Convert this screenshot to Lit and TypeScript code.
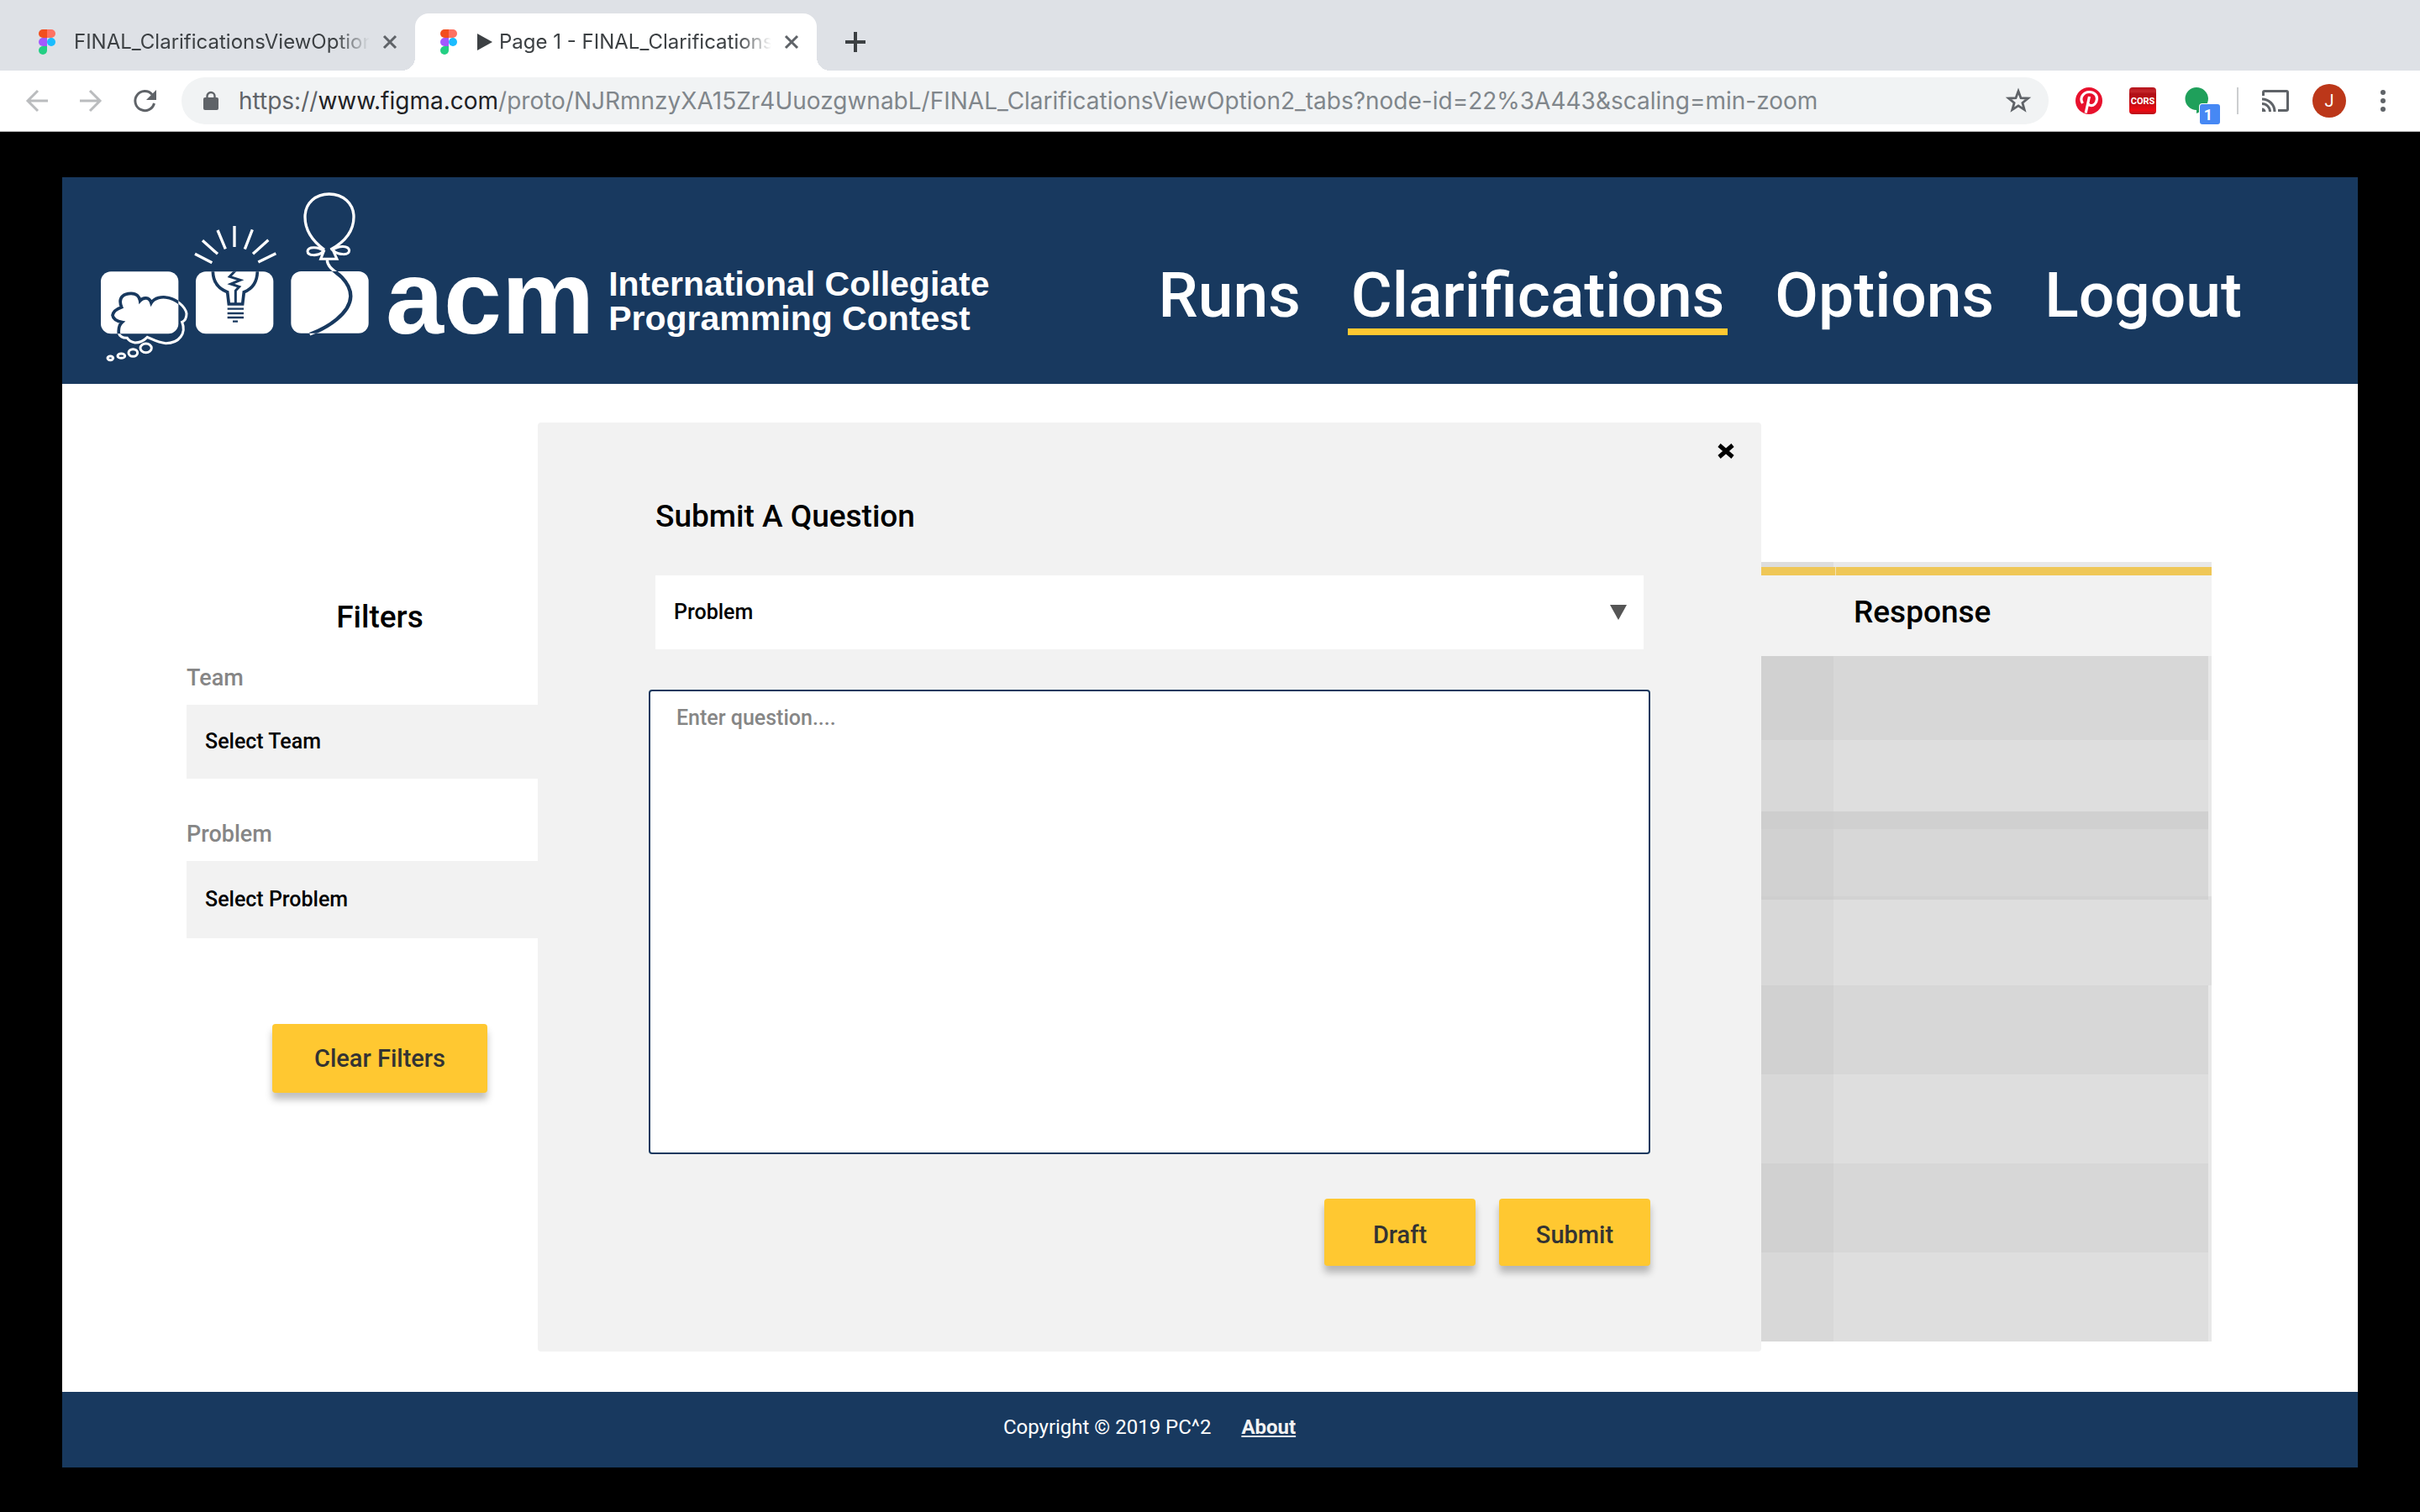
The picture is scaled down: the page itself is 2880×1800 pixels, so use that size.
import { LitElement, html, css, nothing } from "lit";
import { customElement } from "lit/decorators.js";

const figmaMark = html`
  <svg class="figma" viewBox="0 0 20 30" aria-hidden="true">
    <path fill="#f24e1e" d="M5 0h5v10H5A5 5 0 0 1 5 0z" />
    <path fill="#ff7262" d="M10 0h5a5 5 0 0 1 0 10h-5z" />
    <path fill="#a259ff" d="M5 10h5v10H5a5 5 0 0 1 0-10z" />
    <circle fill="#1abcfe" cx="15" cy="15" r="5" />
    <path fill="#23cf84" d="M5 20h5v5a5 5 0 1 1-5-5z" />
  </svg>
`;

@customElement("browser-bar")
class BrowserBar extends LitElement {
  static styles = css`
    :host {
      display: block;
      font-family: Inter, Roboto, "Liberation Sans", sans-serif;
      color: #3c4043;
    }
    button {
      display: grid;
      place-items: center;
      border: 0;
      padding: 0;
      background: none;
      color: inherit;
      font: inherit;
    }
    svg {
      display: block;
      overflow: visible;
    }
    .strip {
      display: flex;
      align-items: flex-end;
      height: 84px;
      padding-left: 16px;
      background: #dee1e6;
    }
    .tab {
      position: relative;
      display: flex;
      align-items: center;
      box-sizing: border-box;
      width: 478px;
      height: 68px;
      padding: 0 14px 0 30px;
      border-radius: 16px 16px 0 0;
    }
    .tab.active {
      background: #fff;
    }
    .tab.active::before,
    .tab.active::after {
      content: "";
      position: absolute;
      bottom: 0;
      width: 16px;
      height: 16px;
    }
    .tab.active::before {
      left: -16px;
      background: radial-gradient(circle at 0 0, transparent 16px, #fff 16px);
    }
    .tab.active::after {
      right: -16px;
      background: radial-gradient(circle at 100% 0, transparent 16px, #fff 16px);
    }
    .figma {
      flex: none;
      width: 20px;
      height: 30px;
    }
    .play {
      flex: none;
      width: 18px;
      height: 20px;
      margin: 0 8px 0 24px;
    }
    .title {
      flex: 1;
      min-width: 0;
      margin-left: 22px;
      white-space: nowrap;
      font-size: 24px;
      line-height: 32px;
      mask-image: linear-gradient(to left, transparent, #000 40px);
    }
    .play + .title {
      margin-left: 0;
    }
    .close {
      width: 32px;
      height: 32px;
      margin-left: 8px;
      color: #5f6368;
    }
    .plus {
      width: 60px;
      height: 68px;
      margin-left: 16px;
    }
    .toolbar {
      display: flex;
      align-items: center;
      height: 72px;
      padding: 0 12px;
      border-bottom: 1px solid #b6b4b6;
      background: #fff;
      color: #5f6368;
    }
    .cell {
      flex: none;
      width: 64px;
      height: 56px;
    }
    .off {
      color: #babcbe;
    }
    .omnibox {
      flex: 1;
      display: flex;
      align-items: center;
      height: 56px;
      margin: 0 16px 0 12px;
      padding: 0 12px 0 26px;
      border-radius: 28px;
      background: #f1f3f4;
    }
    .url {
      flex: 1;
      margin-left: 24px;
      white-space: nowrap;
      font-size: 28px;
      line-height: 36px;
      color: #80868b;
    }
    .scheme {
      color: #5f6368;
    }
    .host {
      color: #202124;
    }
    .star {
      width: 48px;
      height: 48px;
    }
    .rule {
      width: 2px;
      height: 32px;
      margin: 0 12px 0 16px;
      background: #ccced0;
    }
    .cors {
      font: 700 11px Roboto, sans-serif;
    }
    .count {
      font: 700 18px Roboto, sans-serif;
    }
    .avatar {
      font: 400 20px Roboto, sans-serif;
    }
  `;

  private renderTab(title: string, active: boolean) {
    return html`
      <div class="tab ${active ? "active" : ""}">
        ${figmaMark}
        ${active
          ? html`<svg class="play" viewBox="0 0 18 20" aria-hidden="true"><path d="M0 0 18 10 0 20z" fill="#3c4043" /></svg>`
          : nothing}
        <span class="title">${title}</span>
        <button class="close" aria-label="Close tab">
          <svg width="16" height="16" viewBox="0 0 16 16"><path d="M1 1 15 15M15 1 1 15" stroke="currentColor" stroke-width="3" /></svg>
        </button>
      </div>
    `;
  }

  render() {
    return html`
      <div class="strip">
        ${this.renderTab("FINAL_ClarificationsViewOption", false)}
        ${this.renderTab("Page 1 - FINAL_Clarifications", true)}
        <button class="plus" aria-label="New tab">
          <svg width="24" height="24" viewBox="0 0 24 24"><path d="M12 0V24M0 12H24" stroke="currentColor" stroke-width="4" /></svg>
        </button>
      </div>
      <div class="toolbar">
        <button class="cell off" aria-label="Back">
          <svg width="26" height="26" viewBox="0 0 26 26"><path d="M26 13H3M14 1 2 13 14 25" fill="none" stroke="currentColor" stroke-width="3" /></svg>
        </button>
        <button class="cell off" aria-label="Forward">
          <svg width="26" height="26" viewBox="0 0 26 26"><path d="M0 13H23M12 1 24 13 12 25" fill="none" stroke="currentColor" stroke-width="3" /></svg>
        </button>
        <button class="cell" aria-label="Reload">
          <svg width="26" height="26" viewBox="0 0 26 26">
            <path d="M22 5.500A11.500 11.500 0 1 0 24.500 16" fill="none" stroke="currentColor" stroke-width="3" />
            <path d="M27 0V12H15z" fill="currentColor" />
          </svg>
        </button>
        <div class="omnibox">
          <svg width="18" height="22" viewBox="0 0 18 22" aria-hidden="true">
            <rect x="0" y="7" width="18" height="15" rx="2" fill="currentColor" />
            <path d="M4.500 8V5.500a4.500 4.500 0 0 1 9 0V8" fill="none" stroke="currentColor" stroke-width="2.400" />
          </svg>
          <span class="url"><span class="scheme">https://</span><span class="host">www.figma.com</span>/proto/NJRmnzyXA15Zr4UuozgwnabL/FINAL_ClarificationsViewOption2_tabs?node-id=22%3A443&amp;scaling=min-zoom</span>
          <button class="star" aria-label="Bookmark this page">
            <svg width="30" height="30" viewBox="0 0 30 30">
              <path d="M15 3.500 18 11.700 26.500 12 19.900 17.400 22.200 25.600 15 20.900 7.800 25.600 10.100 17.400 3.500 12 12 11.700z" fill="none" stroke="currentColor" stroke-width="2.800" />
            </svg>
          </button>
        </div>
        <button class="cell" aria-label="Pinterest">
          <svg width="32" height="32" viewBox="0 0 32 32">
            <circle cx="16" cy="16" r="16" fill="#e8112d" />
            <path d="M8.500 19C4 12 10 5.500 16.500 5.500c6 0 9.500 4 9 8.500-.5 5-4 8-7.500 7.500-2-.3-2.800-1.500-2.800-2.500M16.500 11 12.200 30.500" fill="none" stroke="#fff" stroke-width="3.200" />
          </svg>
        </button>
        <button class="cell" aria-label="CORS">
          <svg width="32" height="32" viewBox="0 0 32 32">
            <defs>
              <linearGradient id="red" x1="0" y1="0" x2="0" y2="1">
                <stop offset="0" stop-color="#b5121b" />
                <stop offset="0.150" stop-color="#c4262b" />
                <stop offset="0.250" stop-color="#b00f16" />
                <stop offset="0.600" stop-color="#c60d14" />
                <stop offset="0.850" stop-color="#ee0a12" />
                <stop offset="1" stop-color="#b5121b" />
              </linearGradient>
            </defs>
            <rect width="32" height="32" rx="4" fill="url(#red)" />
            <text class="cors" x="16" y="20" text-anchor="middle" fill="#fff">CORS</text>
          </svg>
        </button>
        <button class="cell" aria-label="Hangouts, 1 notification">
          <svg width="32" height="32" viewBox="0 0 32 32">
            <path d="M16 0a14 14 0 0 1 14 13C30 21 24 28 16 31V27A13.500 13.500 0 0 1 16 0z" fill="#1fa05b" />
            <rect x="19" y="19" width="26" height="26" rx="4" fill="#fff" />
            <rect x="20" y="20" width="24" height="24" rx="3" fill="#4688f4" />
            <text class="count" x="30" y="39" text-anchor="middle" fill="#fff">1</text>
          </svg>
        </button>
        <span class="rule"></span>
        <button class="cell" aria-label="Cast">
          <svg width="32" height="26" viewBox="0 0 32 26">
            <g fill="none" stroke="currentColor" stroke-width="3">
              <path d="M1.500 7V3Q1.500 1.500 3 1.500H29Q30.500 1.500 30.500 3V23Q30.500 24.500 29 24.500H19" />
              <path d="M0 16.500A9.500 9.500 0 0 1 9.500 26M0 11A15 15 0 0 1 15 26" />
            </g>
            <path d="M0 21.500A4.500 4.500 0 0 1 4.500 26H0z" fill="currentColor" />
          </svg>
        </button>
        <button class="cell" aria-label="Profile">
          <svg width="40" height="40" viewBox="0 0 40 40">
            <circle cx="20" cy="20" r="20" fill="#bc3719" />
            <text class="avatar" x="20" y="27" text-anchor="middle" fill="#fff">J</text>
          </svg>
        </button>
        <button class="cell" aria-label="Menu">
          <svg width="6" height="26" viewBox="0 0 6 26" fill="currentColor">
            <circle cx="3" cy="3" r="3" /><circle cx="3" cy="13" r="3" /><circle cx="3" cy="23" r="3" />
          </svg>
        </button>
      </div>
    `;
  }
}

const cloud =
  "M104 437C88 398 118 388 138 388 158 388 168 400 170 414 180 402 203 398 210 422 222 402 250 400 262 402 300 406 332 436 336 460 336 476 330 486 320 490 336 530 310 566 262 566 235 564 215 552 196 544 182 558 168 564 152 564 138 562 128 554 124 547 108 548 96 540 94 530 92 510 98 498 106 491 90 488 74 480 72 466 74 452 90 442 104 437Z";
const balloonString = "M838 268C838 296 870 310 890 330 915 356 922 376 922 398 920 460 840 510 776 534";

@customElement("contest-header")
class ContestHeader extends LitElement {
  static styles = css`
    :host {
      display: flex;
      align-items: flex-start;
      justify-content: space-between;
      box-sizing: border-box;
      height: 246px;
      padding: 9px 134px 0 36px;
      background: #18395f;
      color: #fff;
    }
    .brand {
      display: flex;
    }
    .art {
      display: block;
      width: 340px;
      height: 220px;
    }
    .acm {
      margin-left: 9px;
      padding-top: 84px;
      font: 700 124px/100px "Liberation Sans", Arial, sans-serif;
    }
    .name {
      margin-left: 17px;
      padding-top: 98px;
      font: 700 41px/41px "Liberation Sans", Arial, sans-serif;
      white-space: nowrap;
    }
    .nav {
      display: flex;
      gap: 52px;
      padding-top: 93px;
    }
    .link {
      padding: 0 4px 2px;
      border-bottom: 8px solid transparent;
      color: #fff;
      font: 500 75px/76px Roboto, sans-serif;
      text-decoration: none;
    }
    .link.current {
      border-color: #ffc831;
    }
  `;

  render() {
    const line = "#18395f";
    return html`
      <div class="brand">
        <svg class="art" viewBox="0 0 1020 660" fill="none" aria-hidden="true">
          <defs>
            <clipPath id="c1"><rect x="30" y="310" width="277" height="222" rx="36" /></clipPath>
            <clipPath id="c2"><rect x="369" y="310" width="277" height="222" rx="36" /></clipPath>
            <clipPath id="c3"><rect x="709" y="309" width="277" height="221" rx="36" /></clipPath>
          </defs>
          <g fill="#fff">
            <rect x="30" y="310" width="277" height="222" rx="36" />
            <rect x="369" y="310" width="277" height="222" rx="36" />
            <rect x="709" y="309" width="277" height="221" rx="36" />
          </g>
          <path d=${cloud} stroke="#fff" stroke-width="9" />
          <path d=${cloud} stroke=${line} stroke-width="11" clip-path="url(#c1)" />
          <g stroke="#fff" stroke-width="9">
            <ellipse cx="191" cy="583" rx="20" ry="16" />
            <ellipse cx="145" cy="600" rx="16" ry="13" />
            <ellipse cx="103" cy="611" rx="13" ry="8" />
            <ellipse cx="64" cy="619" rx="10" ry="7" />
          </g>
          <path d="M507 147V222M447 162 475 229M571 160 544 230M393 199 447 247M628 197 573 247M366 247 427 278M655 245 592 276" stroke="#fff" stroke-width="10" />
          <g stroke=${line} clip-path="url(#c2)">
            <path d="M430 306C430 350 452 372 482 383L487 426H536L541 383C570 372 589 350 589 306" stroke-width="11" />
            <path d="M511 306 490 328 528 340 494 354 524 364 511 378V426" stroke-width="9" />
            <path d="M482 443H540M482 459H540M482 474H540M501 488H519" stroke-width="7" />
          </g>
          <g stroke="#fff" stroke-width="10">
            <path d="M828 232C784 200 759 160 759 115 759 64 798 33 845 33 894 33 933 66 933 115 933 160 905 202 850 232" />
            <path d="M824 235C810 222 770 218 768 237 768 256 806 254 822 240M858 232C880 216 914 216 917 234 916 254 880 250 862 237M828 232 815 265H873L858 232" stroke-width="9" />
            <path d=${balloonString} />
          </g>
          <path d=${balloonString} stroke=${line} stroke-width="13" clip-path="url(#c3)" />
        </svg>
        <span class="acm">acm</span>
        <span class="name">International Collegiate<br />Programming Contest</span>
      </div>
      <nav class="nav">
        <a class="link" href="#runs">Runs</a>
        <a class="link current" href="#clarifications" aria-current="page">Clarifications</a>
        <a class="link" href="#options">Options</a>
        <a class="link" href="#logout">Logout</a>
      </nav>
    `;
  }
}

const buttonStyles = css`
  .action {
    width: 180px;
    height: 80px;
    padding: 0;
    border: 0;
    border-radius: 4px;
    background: #ffc831;
    box-shadow: 0 8px 8px rgba(0, 0, 0, 0.25);
    color: #333;
    font: 500 29px/32px Roboto, sans-serif;
  }
  select {
    appearance: none;
    box-sizing: border-box;
    width: 100%;
    height: 88px;
    padding: 0 22px;
    border: 0;
    border-radius: 0;
    background: #f2f2f2;
    color: #000;
    font: 500 25px/28px Roboto, sans-serif;
  }
  h2 {
    margin: 0;
    font: 500 37px/44px Roboto, sans-serif;
  }
`;

@customElement("filter-panel")
class FilterPanel extends LitElement {
  static styles = [
    buttonStyles,
    css`
      :host {
        display: flex;
        flex-direction: column;
        padding-top: 44px;
      }
      h2 {
        margin-bottom: 34px;
        text-align: center;
      }
      .label {
        margin-bottom: 16px;
        color: #868686;
        font: 500 27px/32px Roboto, sans-serif;
      }
      .field {
        margin-bottom: 50px;
      }
      .tall {
        height: 92px;
      }
      .clear {
        align-self: center;
        width: 256px;
        height: 82px;
        margin-top: 52px;
      }
    `,
  ];

  render() {
    return html`
      <h2>Filters</h2>
      <label class="label" for="team">Team</label>
      <select class="field" id="team"><option>Select Team</option></select>
      <label class="label" for="problem">Problem</label>
      <select class="field tall" id="problem"><option>Select Problem</option></select>
      <button class="action clear">Clear Filters</button>
    `;
  }
}

const rows = ["first", "second", "overlap", "wide", "", "", "", ""];

@customElement("response-table")
class ResponseTable extends LitElement {
  static styles = css`
    :host {
      display: block;
    }
    table {
      width: 100%;
      table-layout: fixed;
      border-collapse: separate;
      border-spacing: 0;
    }
    th,
    td {
      box-sizing: border-box;
      padding: 0;
    }
    .response-col {
      width: 446px;
    }
    .edge-col {
      width: 4px;
    }
    th {
      height: 112px;
      padding: 8px 0 0 24px;
      background: linear-gradient(#e8e8e8 6px, #efc757 6px 16px, #f2f2f2 16px);
      text-align: left;
      font: 500 37px/44px Roboto, sans-serif;
    }
    th:first-child {
      background: linear-gradient(#ddd 6px, #efc757 6px 16px, #f2f2f2 16px);
    }
    .response {
      background:
        linear-gradient(#f4e3b4, #f4e3b4) 2px 6px / 1px 10px no-repeat,
        linear-gradient(#e8e8e8 6px, #efc757 6px 16px, #f2f2f2 16px);
    }
    th:last-child {
      padding: 0;
    }
    td {
      height: 106px;
      background: #d7d7d7;
    }
    td:first-child {
      background: #d1d1d1;
    }
    td:last-child,
    tr:nth-child(even) td:last-child {
      background: #e8e8e8;
    }
    tr:nth-child(even) td {
      background: #dedede;
    }
    tr:nth-child(even) td:first-child {
      background: #d8d8d8;
    }
    .first td {
      height: 100px;
    }
    .second td {
      height: 85px;
    }
    .overlap td {
      height: 101px;
      border-top: 21px solid #d0d0d0;
    }
    .overlap td:first-child {
      border-color: #cecece;
    }
    .overlap td:last-child {
      border-color: #e8e8e8;
    }
    .wide td {
      border-top: 4px solid #d2d2d2;
    }
    .wide td:first-child {
      border-color: #cecece;
    }
    tr.wide td:last-child {
      border-color: #dedede;
      background: #dedede;
    }
  `;

  render() {
    return html`
      <table>
        <colgroup>
          <col />
          <col class="response-col" />
          <col class="edge-col" />
        </colgroup>
        <thead>
          <tr><th></th><th class="response">Response</th><th></th></tr>
        </thead>
        <tbody>
          ${rows.map((kind) => html`<tr class=${kind}><td></td><td></td><td></td></tr>`)}
        </tbody>
      </table>
    `;
  }
}

@customElement("question-dialog")
class QuestionDialog extends LitElement {
  static styles = [
    buttonStyles,
    css`
      :host {
        display: flex;
        flex-direction: column;
        border-radius: 4px;
        background: #f2f2f2;
      }
      .bar {
        display: flex;
        justify-content: flex-end;
        padding: 14px 22px 0;
      }
      .close {
        display: grid;
        place-items: center;
        width: 40px;
        height: 40px;
        padding: 0;
        border: 0;
        background: none;
      }
      .form {
        display: flex;
        flex-direction: column;
        padding: 36px 132px 102px;
      }
      h2 {
        margin: 0 8px 48px;
      }
      .picker {
        display: grid;
        align-items: center;
        margin: 0 8px 48px;
      }
      .picker > * {
        grid-area: 1 / 1;
      }
      select {
        background: #fff;
      }
      .arrow {
        justify-self: end;
        margin-right: 20px;
        pointer-events: none;
      }
      textarea {
        box-sizing: border-box;
        width: 100%;
        height: 553px;
        padding: 18px 31px;
        border: 2px solid #18395f;
        border-radius: 4px;
        background: #fff;
        resize: none;
        font: 500 25px/28px Roboto, sans-serif;
      }
      textarea::placeholder {
        color: #868686;
      }
      .actions {
        display: flex;
        justify-content: flex-end;
        gap: 28px;
        margin-top: 53px;
      }
      .action {
        padding-top: 6px;
      }
    `,
  ];

  render() {
    return html`
      <div class="bar">
        <button class="close" aria-label="Close">
          <svg width="20" height="18" viewBox="0 0 20 18"><path d="M2 2 18 16M18 2 2 16" stroke="#000" stroke-width="5" /></svg>
        </button>
      </div>
      <form class="form">
        <h2>Submit A Question</h2>
        <div class="picker">
          <select aria-label="Problem"><option>Problem</option></select>
          <svg class="arrow" width="20" height="18" viewBox="0 0 20 18" aria-hidden="true"><path d="M0 0H20L10 18z" fill="#555" /></svg>
        </div>
        <textarea aria-label="Question" placeholder="Enter question...."></textarea>
        <div class="actions">
          <button class="action" type="button">Draft</button>
          <button class="action" type="button">Submit</button>
        </div>
      </form>
    `;
  }
}

@customElement("app-root")
class AppRoot extends LitElement {
  static styles = css`
    :host {
      display: flex;
      flex-direction: column;
      min-height: 100vh;
      background: #000;
    }
    .page {
      flex: 1;
      display: flex;
      flex-direction: column;
      margin: 54px 74px 53px;
    }
    .content {
      flex: 1;
      position: relative;
      display: grid;
      grid-template-columns: 460px 1fr;
      gap: 98px;
      align-items: start;
      padding: 212px 174px 60px 148px;
      background: #fff;
    }
    .dialog {
      position: absolute;
      top: 46px;
      left: 566px;
      right: 710px;
    }
    .footer {
      display: flex;
      justify-content: center;
      gap: 36px;
      box-sizing: border-box;
      height: 90px;
      padding: 28px 144px 0 0;
      background: #18395f;
      color: #fff;
      font: 400 24px/28px Roboto, sans-serif;
    }
    .about {
      color: #f2f2f2;
      font-weight: 700;
    }
  `;

  render() {
    return html`
      <browser-bar></browser-bar>
      <div class="page">
        <contest-header></contest-header>
        <main class="content">
          <filter-panel></filter-panel>
          <response-table></response-table>
          <question-dialog class="dialog" role="dialog" aria-label="Submit A Question"></question-dialog>
        </main>
        <footer class="footer">
          <span>Copyright © 2019 PC^2</span>
          <a class="about" href="#about">About</a>
        </footer>
      </div>
    `;
  }
}
